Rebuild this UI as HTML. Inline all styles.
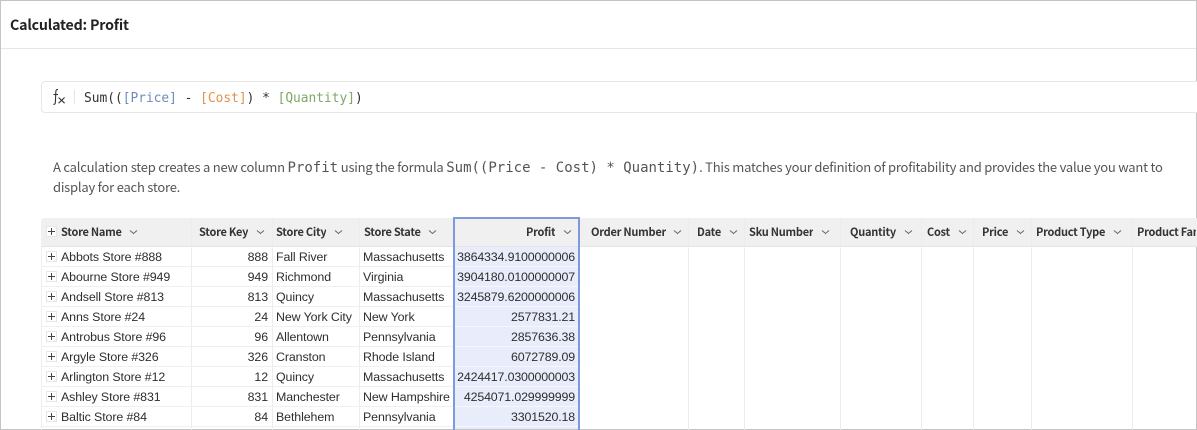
<!DOCTYPE html>
<html><head><meta charset="utf-8">
<style>
html,body{margin:0;padding:0;background:#fff}
#p{position:relative;width:1197px;height:430px;overflow:hidden;background:#fff;font-family:"Noto Sans CJK JP","Liberation Sans",sans-serif}
.a{position:absolute;white-space:nowrap}
.m{font-family:"DejaVu Sans Mono","Liberation Mono",monospace}
.l{position:absolute}
.h{position:absolute;top:218px;height:29px;line-height:28px;font-size:11px;font-weight:700;letter-spacing:-.25px;color:#333;white-space:nowrap;overflow:hidden}
.c{position:absolute;height:20px;line-height:20px;font-family:"Liberation Sans",sans-serif;font-size:12.4px;letter-spacing:-.1px;color:#2e2e2e;white-space:nowrap}
.r{text-align:right}
.n{letter-spacing:-.15px}
.ch{position:absolute;top:229px;width:9px;height:6px}
.pb{position:absolute;left:46px;width:9px;height:9px;border:1px solid #e6e6e6;background:#fff}
.pb:before{content:"";position:absolute;left:1px;top:4px;width:7px;height:1px;background:#444}
.pb:after{content:"";position:absolute;left:4px;top:1px;width:1px;height:7px;background:#444}
</style></head><body>
<div id="p">
<div class="l" style="left:0;top:0;width:1197px;height:1px;background:#c4c4c4"></div>
<div class="l" style="left:0;top:0;width:1px;height:430px;background:#c4c4c4"></div>
<div class="l" style="left:1196px;top:0;width:1px;height:430px;background:#c4c4c4"></div>
<div class="l" style="left:0;top:429px;width:1197px;height:1px;background:#c4c4c4"></div>
<div class="l" style="left:1px;top:48px;width:1195px;height:1px;background:#e6e6e6"></div>

<div class="a" style="left:10px;top:14px;font-size:14.2px;letter-spacing:-.18px;line-height:23px;font-weight:700;color:#222">Calculated: Profit</div>

<div class="l" style="left:41px;top:81px;width:1160px;height:30px;border:1px solid #e6e6e6;border-radius:4px;background:#fff"></div>
<svg class="l" style="left:52px;top:88px" width="16" height="18" viewBox="0 0 16 18" fill="none" stroke="#333" stroke-width="1.1"><path d="M6 1.5C4.4 1.2 3.9 2.3 3.8 4L3.4 14C3.3 15.8 2.8 16.6 1.4 16.3"/><path d="M1.5 6.5H6"/><path d="M6.6 9.5L12.6 15.2M12.6 9.5L6.6 15.2"/></svg>
<div class="l" style="left:74px;top:90px;width:1px;height:14px;background:#e4e4e4"></div>
<div class="a m" style="left:84px;top:89px;font-size:12.87px;line-height:20px;color:#333">Sum((<span style="color:#6f8bbd">[Price]</span> - <span style="color:#e0924a">[Cost]</span>) * <span style="color:#7fa866">[Quantity]</span>)</div>

<div class="a" style="left:53px;top:156px;font-size:13px;letter-spacing:-.225px;line-height:21px;color:#555">A calculation step creates a new column <span class="m" style="font-size:14px;letter-spacing:0">Profit</span> using the formula <span class="m" style="font-size:14px;letter-spacing:0">Sum((Price - Cost) * Quantity)</span>. This matches your definition of profitability and provides the value you want to</div>
<div class="a" style="left:53px;top:176px;font-size:13px;letter-spacing:-.225px;line-height:21px;color:#555">display for each store.</div>

<!-- table header background -->
<div class="l" style="left:41px;top:218px;width:1156px;height:29px;background:#f0f0f0;border-radius:3px 0 0 0"></div>
<div class="l" style="left:41px;top:246px;width:1156px;height:1px;background:#e4e4e4"></div>
<div class="l" style="left:41px;top:247px;width:1px;height:183px;background:#efefef"></div>

<!-- column separators -->
<div class="l" style="left:191px;top:218px;width:1px;height:212px;background:#ececec"></div>
<div class="l" style="left:272px;top:218px;width:1px;height:212px;background:#ececec"></div>
<div class="l" style="left:359px;top:218px;width:1px;height:212px;background:#ececec"></div>
<div class="l" style="left:688px;top:218px;width:1px;height:212px;background:#ececec"></div>
<div class="l" style="left:744px;top:218px;width:1px;height:212px;background:#ececec"></div>
<div class="l" style="left:840px;top:218px;width:1px;height:212px;background:#ececec"></div>
<div class="l" style="left:921px;top:218px;width:1px;height:212px;background:#ececec"></div>
<div class="l" style="left:973px;top:218px;width:1px;height:212px;background:#ececec"></div>
<div class="l" style="left:1031px;top:218px;width:1px;height:212px;background:#ececec"></div>
<div class="l" style="left:1132px;top:218px;width:1px;height:212px;background:#ececec"></div>

<!-- row lines -->
<div class="l" style="left:42px;top:266px;width:538px;height:1px;background:#f0f0f0"></div>
<div class="l" style="left:42px;top:286px;width:538px;height:1px;background:#f0f0f0"></div>
<div class="l" style="left:42px;top:306px;width:538px;height:1px;background:#f0f0f0"></div>
<div class="l" style="left:42px;top:326px;width:538px;height:1px;background:#f0f0f0"></div>
<div class="l" style="left:42px;top:346px;width:538px;height:1px;background:#f0f0f0"></div>
<div class="l" style="left:42px;top:366px;width:538px;height:1px;background:#f0f0f0"></div>
<div class="l" style="left:42px;top:386px;width:538px;height:1px;background:#f0f0f0"></div>
<div class="l" style="left:42px;top:406px;width:538px;height:1px;background:#f0f0f0"></div>
<div class="l" style="left:42px;top:426px;width:538px;height:1px;background:#f0f0f0"></div>

<!-- profit column -->
<div class="l" style="left:453px;top:247px;width:127px;height:182px;background:#e9edfb"></div>
<div class="l" style="left:455px;top:266px;width:123px;height:1px;background:#f6f7fd"></div>
<div class="l" style="left:455px;top:286px;width:123px;height:1px;background:#f6f7fd"></div>
<div class="l" style="left:455px;top:306px;width:123px;height:1px;background:#f6f7fd"></div>
<div class="l" style="left:455px;top:326px;width:123px;height:1px;background:#f6f7fd"></div>
<div class="l" style="left:455px;top:346px;width:123px;height:1px;background:#f6f7fd"></div>
<div class="l" style="left:455px;top:366px;width:123px;height:1px;background:#f6f7fd"></div>
<div class="l" style="left:455px;top:386px;width:123px;height:1px;background:#f6f7fd"></div>
<div class="l" style="left:455px;top:406px;width:123px;height:1px;background:#f6f7fd"></div>
<div class="l" style="left:455px;top:426px;width:123px;height:1px;background:#f6f7fd"></div>
<div class="l" style="left:453px;top:217px;width:123px;height:212px;border:2px solid #7f99de;border-bottom:none;box-sizing:content-box"></div>

<!-- header labels -->
<div class="pb" style="top:226px;background:#fff;border-color:#e6e6e6"></div>
<div class="h" style="left:61px">Store Name</div>
<div class="h" style="left:199px">Store Key</div>
<div class="h" style="left:276px">Store City</div>
<div class="h" style="left:364px">Store State</div>
<div class="h" style="left:526px">Profit</div>
<div class="h" style="left:591px">Order Number</div>
<div class="h" style="left:697px">Date</div>
<div class="h" style="left:749px">Sku Number</div>
<div class="h" style="left:850px">Quantity</div>
<div class="h" style="left:927px">Cost</div>
<div class="h" style="left:982px">Price</div>
<div class="h" style="left:1036px">Product Type</div>
<div class="h" style="left:1137px;width:59px">Product Family</div>

<svg class="ch" style="left:129px" viewBox="0 0 9 6" fill="none" stroke="#666"><path d="M1 1.5L4.5 4.5L8 1.5"/></svg>
<svg class="ch" style="left:256px" viewBox="0 0 9 6" fill="none" stroke="#666"><path d="M1 1.5L4.5 4.5L8 1.5"/></svg>
<svg class="ch" style="left:334px" viewBox="0 0 9 6" fill="none" stroke="#666"><path d="M1 1.5L4.5 4.5L8 1.5"/></svg>
<svg class="ch" style="left:428px" viewBox="0 0 9 6" fill="none" stroke="#666"><path d="M1 1.5L4.5 4.5L8 1.5"/></svg>
<svg class="ch" style="left:563px" viewBox="0 0 9 6" fill="none" stroke="#666"><path d="M1 1.5L4.5 4.5L8 1.5"/></svg>
<svg class="ch" style="left:673px" viewBox="0 0 9 6" fill="none" stroke="#666"><path d="M1 1.5L4.5 4.5L8 1.5"/></svg>
<svg class="ch" style="left:729px" viewBox="0 0 9 6" fill="none" stroke="#666"><path d="M1 1.5L4.5 4.5L8 1.5"/></svg>
<svg class="ch" style="left:821px" viewBox="0 0 9 6" fill="none" stroke="#666"><path d="M1 1.5L4.5 4.5L8 1.5"/></svg>
<svg class="ch" style="left:904px" viewBox="0 0 9 6" fill="none" stroke="#666"><path d="M1 1.5L4.5 4.5L8 1.5"/></svg>
<svg class="ch" style="left:958px" viewBox="0 0 9 6" fill="none" stroke="#666"><path d="M1 1.5L4.5 4.5L8 1.5"/></svg>
<svg class="ch" style="left:1016px" viewBox="0 0 9 6" fill="none" stroke="#666"><path d="M1 1.5L4.5 4.5L8 1.5"/></svg>
<svg class="ch" style="left:1113px" viewBox="0 0 9 6" fill="none" stroke="#666"><path d="M1 1.5L4.5 4.5L8 1.5"/></svg>

<!-- expanders -->
<div class="pb" style="top:251px"></div>
<div class="pb" style="top:271px"></div>
<div class="pb" style="top:291px"></div>
<div class="pb" style="top:311px"></div>
<div class="pb" style="top:331px"></div>
<div class="pb" style="top:351px"></div>
<div class="pb" style="top:371px"></div>
<div class="pb" style="top:391px"></div>
<div class="pb" style="top:411px"></div>

<!-- rows -->
<div class="c" style="left:61px;top:247px">Abbots Store #888</div><div class="c r" style="left:200px;width:68px;top:247px">888</div><div class="c" style="left:276px;top:247px">Fall River</div><div class="c" style="left:363px;top:247px">Massachusetts</div><div class="c r n" style="left:455px;width:120px;top:247px">3864334.9100000006</div>
<div class="c" style="left:61px;top:267px">Abourne Store #949</div><div class="c r" style="left:200px;width:68px;top:267px">949</div><div class="c" style="left:276px;top:267px">Richmond</div><div class="c" style="left:363px;top:267px">Virginia</div><div class="c r n" style="left:455px;width:120px;top:267px">3904180.0100000007</div>
<div class="c" style="left:61px;top:287px">Andsell Store #813</div><div class="c r" style="left:200px;width:68px;top:287px">813</div><div class="c" style="left:276px;top:287px">Quincy</div><div class="c" style="left:363px;top:287px">Massachusetts</div><div class="c r n" style="left:455px;width:120px;top:287px">3245879.6200000006</div>
<div class="c" style="left:61px;top:307px">Anns Store #24</div><div class="c r" style="left:200px;width:68px;top:307px">24</div><div class="c" style="left:276px;top:307px">New York City</div><div class="c" style="left:363px;top:307px">New York</div><div class="c r n" style="left:455px;width:120px;top:307px">2577831.21</div>
<div class="c" style="left:61px;top:327px">Antrobus Store #96</div><div class="c r" style="left:200px;width:68px;top:327px">96</div><div class="c" style="left:276px;top:327px">Allentown</div><div class="c" style="left:363px;top:327px">Pennsylvania</div><div class="c r n" style="left:455px;width:120px;top:327px">2857636.38</div>
<div class="c" style="left:61px;top:347px">Argyle Store #326</div><div class="c r" style="left:200px;width:68px;top:347px">326</div><div class="c" style="left:276px;top:347px">Cranston</div><div class="c" style="left:363px;top:347px">Rhode Island</div><div class="c r n" style="left:455px;width:120px;top:347px">6072789.09</div>
<div class="c" style="left:61px;top:367px">Arlington Store #12</div><div class="c r" style="left:200px;width:68px;top:367px">12</div><div class="c" style="left:276px;top:367px">Quincy</div><div class="c" style="left:363px;top:367px">Massachusetts</div><div class="c r n" style="left:455px;width:120px;top:367px">2424417.0300000003</div>
<div class="c" style="left:61px;top:387px">Ashley Store #831</div><div class="c r" style="left:200px;width:68px;top:387px">831</div><div class="c" style="left:276px;top:387px">Manchester</div><div class="c" style="left:363px;top:387px">New Hampshire</div><div class="c r n" style="left:455px;width:120px;top:387px">4254071.029999999</div>
<div class="c" style="left:61px;top:407px">Baltic Store #84</div><div class="c r" style="left:200px;width:68px;top:407px">84</div><div class="c" style="left:276px;top:407px">Bethlehem</div><div class="c" style="left:363px;top:407px">Pennsylvania</div><div class="c r n" style="left:455px;width:120px;top:407px">3301520.18</div>
</div>
</body></html>
